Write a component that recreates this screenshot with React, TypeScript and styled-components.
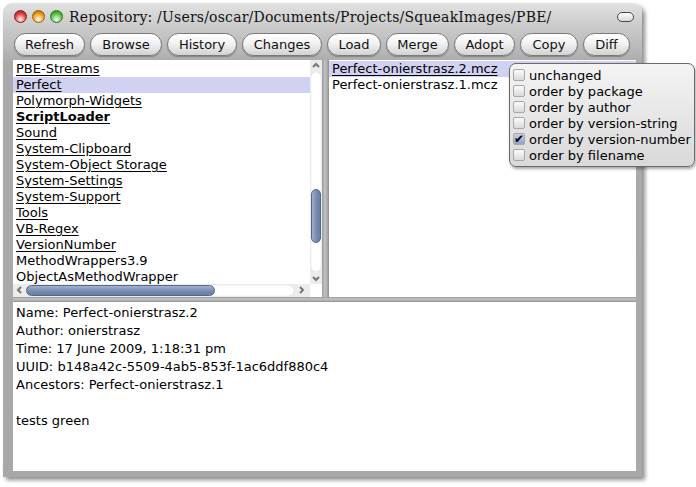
import styled, { createGlobalStyle } from "styled-components";

const GlobalStyle = createGlobalStyle`
  body {
    margin: 0;
    background: #ffffff;
    font-family: "DejaVu Sans", "Liberation Sans", sans-serif;
    font-size: 13px;
    color: #000;
  }
`;

const Desktop = styled.div`
  position: relative;
  width: 696px;
  height: 487px;
  padding: 3px 0 0 3px;
  box-sizing: border-box;
  overflow: hidden;
`;

const Window = styled.div`
  width: 639px;
  height: 474px;
  display: flex;
  flex-direction: column;
  background: linear-gradient(#e2e2e2 0px, #c8c8c8 26px, #b9b9b9 45px, #aaaaaa 60px, #a8a8a8 100%);
  border-radius: 9px 9px 0 0;
  box-shadow: 3px 3px 4px rgba(0, 0, 0, 0.45);
`;

const TitleBar = styled.div`
  height: 27px;
  display: flex;
  align-items: center;
  padding: 0 8px 0 11px;
  gap: 5px;
`;

const Light = styled.span<{ $color: string; $dark: string }>`
  width: 13px;
  height: 13px;
  flex: none;
  border-radius: 50%;
  border: 1px solid ${(p) => p.$dark};
  box-sizing: border-box;
  background: radial-gradient(circle at 50% 75%, #ffffff 0%, ${(p) => p.$color} 55%, ${(p) => p.$dark} 100%);
`;

const Title = styled.div`
  margin-left: 1px;
  width: 488px;
  overflow: hidden;
  white-space: nowrap;
  font-family: "DejaVu Serif", "Liberation Serif", serif;
  font-size: 14px;
  letter-spacing: 0.2px;
  color: #111;
`;

const Collapse = styled.span`
  margin-left: auto;
  width: 17px;
  height: 10px;
  border: 1.5px solid #4a4a4a;
  border-radius: 6px;
  box-sizing: border-box;
  background: linear-gradient(#ffffff, #d8d8d8);
`;

const Toolbar = styled.div`
  display: flex;
  margin-top: 3px;
  padding-left: 11px;
  gap: 5px;
`;

const Button = styled.button<{ $w: number }>`
  width: ${(p) => p.$w}px;
  height: 23px;
  padding: 0;
  border: 1px solid #7a7a7a;
  border-radius: 12px;
  background: linear-gradient(#ffffff 0%, #f2f2f2 45%, #d2d2d2 100%);
  box-shadow: 0 1px 1px rgba(0, 0, 0, 0.25);
  font-family: "DejaVu Sans", sans-serif;
  font-size: 13px;
  color: #111;
`;

const Panes = styled.div`
  flex: 1;
  display: flex;
  flex-direction: column;
  margin: 4px 6px 6px 10px;
  min-height: 0;
`;

const TopRow = styled.div`
  height: 237px;
  display: flex;
`;

const ListPane = styled.div`
  width: 309px;
  display: grid;
  grid-template-columns: 1fr 12px;
  grid-template-rows: 1fr 13px;
  background: #fff;
`;

const List = styled.div`
  overflow: hidden;
  padding-top: 1px;
`;

const Row = styled.div<{ $selected?: boolean; $underline?: boolean; $bold?: boolean }>`
  height: 16px;
  line-height: 16px;
  padding-left: 3px;
  white-space: nowrap;
  background: ${(p) => (p.$selected ? "#d1d1f2" : "transparent")};
  font-weight: ${(p) => (p.$bold ? "bold" : "normal")};
  text-decoration: ${(p) => (p.$underline ? "underline" : "none")};
  text-underline-offset: 2px;
`;

const VScroll = styled.div`
  display: flex;
  flex-direction: column;
  align-items: center;
  background: #ececec;
`;

const HScroll = styled.div`
  display: flex;
  align-items: center;
  background: #ececec;
  padding: 0 4px 0 1px;
`;

const Arrow = styled.svg`
  flex: none;
`;

const VRail = styled.div`
  flex: 1;
  width: 10px;
  margin: 1px 0;
  border-radius: 6px;
  background: #ffffff;
  box-shadow: inset 0 0 1px #b8b8b8;
  padding-top: 117px;
  box-sizing: border-box;
`;

const HRail = styled.div`
  flex: 1;
  height: 11px;
  margin: 0 2px;
  border-radius: 6px;
  background: #ffffff;
  box-shadow: inset 0 0 1px #b8b8b8;
`;

const VThumb = styled.div`
  width: 10px;
  height: 54px;
  border-radius: 5px;
  border: 1px solid #55678a;
  box-sizing: border-box;
  background: linear-gradient(90deg, #9fb0cc, #7489ad 60%, #6a7fa3);
`;

const HThumb = styled.div`
  width: 189px;
  height: 11px;
  border-radius: 6px;
  border: 1px solid #55678a;
  box-sizing: border-box;
  background: linear-gradient(#a3b3ce, #7489ad 60%, #6a7fa3);
`;

const Corner = styled.div`
  background: #fff;
`;

const VDivider = styled.div`
  width: 7px;
  background: linear-gradient(90deg, #9a9a9a, #c2c2c2 40%, #b0b0b0 70%, #8e8e8e);
`;

const VersionPane = styled.div`
  flex: 1;
  background: #fff;
  padding-top: 1px;
  overflow: hidden;
`;

const HDivider = styled.div`
  height: 5px;
  background: linear-gradient(#9a9a9a, #c2c2c2 40%, #b0b0b0 70%, #8e8e8e);
`;

const InfoPane = styled.div`
  flex: 1;
  background: #fff;
  padding: 2px 3px 1px;
  line-height: 18px;
`;

const Line = styled.div`
  height: 18px;
  white-space: nowrap;
`;

const Menu = styled.div`
  position: absolute;
  left: 509px;
  top: 63px;
  width: 186px;
  height: 104px;
  box-sizing: border-box;
  padding: 3px 0 0 3px;
  border: 1px solid #6a6a6a;
  border-radius: 7px;
  background: linear-gradient(#f4f4f4, #d9d9d9);
  box-shadow: 1px 2px 3px rgba(0, 0, 0, 0.35);
`;

const MenuItem = styled.div`
  height: 16px;
  display: flex;
  align-items: center;
  gap: 4px;
  white-space: nowrap;
`;

const Check = styled.span<{ $on?: boolean }>`
  width: 12px;
  height: 12px;
  flex: none;
  box-sizing: border-box;
  border: 1px solid #a8a8a8;
  border-radius: 2px;
  background: ${(p) =>
    p.$on ? "linear-gradient(#c6d2ea, #8ea3cc)" : "linear-gradient(#fafafa, #dadada)"};
  display: flex;
  align-items: center;
  justify-content: center;
  font-size: 12px;
  line-height: 12px;
  color: #000;
`;

const packages: { name: string; selected?: boolean; underline?: boolean; bold?: boolean }[] = [
  { name: "PBE-Streams", underline: true },
  { name: "Perfect", underline: true, selected: true },
  { name: "Polymorph-Widgets", underline: true },
  { name: "ScriptLoader", underline: true, bold: true },
  { name: "Sound", underline: true },
  { name: "System-Clipboard", underline: true },
  { name: "System-Object Storage", underline: true },
  { name: "System-Settings", underline: true },
  { name: "System-Support", underline: true },
  { name: "Tools", underline: true },
  { name: "VB-Regex", underline: true },
  { name: "VersionNumber", underline: true },
  { name: "MethodWrappers3.9" },
  { name: "ObjectAsMethodWrapper" },
];

const buttons: [string, number][] = [
  ["Refresh", 71],
  ["Browse", 72],
  ["History", 70],
  ["Changes", 80],
  ["Load", 54],
  ["Merge", 63],
  ["Adopt", 61],
  ["Copy", 58],
  ["Diff", 47],
];

const sortOptions = [
  "unchanged",
  "order by package",
  "order by author",
  "order by version-string",
  "order by version-number",
  "order by filename",
];

const Chevron = ({ dir }: { dir: "up" | "down" | "left" | "right" }) => {
  const paths = {
    up: "M2 7 L5 4 L8 7",
    down: "M2 4 L5 7 L8 4",
    left: "M7 2 L4 5 L7 8",
    right: "M4 2 L7 5 L4 8",
  };
  return (
    <Arrow width="10" height="11" viewBox="0 0 10 11">
      <path d={paths[dir]} fill="none" stroke="#777" strokeWidth="2" />
    </Arrow>
  );
};

const App = () => {
  return (
    <Desktop>
      <GlobalStyle />
      <Window>
        <TitleBar>
          <Light $color="#e84040" $dark="#8a1a1a" />
          <Light $color="#f0a020" $dark="#9a5a00" />
          <Light $color="#5cc040" $dark="#2c7a1a" />
          <Title>Repository: /Users/oscar/Documents/Projects/SqueakImages/PBE/</Title>
          <Collapse />
        </TitleBar>
        <Toolbar>
          {buttons.map(([label, w]) => (
            <Button key={label} $w={w}>
              {label}
            </Button>
          ))}
        </Toolbar>
        <Panes>
          <TopRow>
            <ListPane>
              <List>
                {packages.map((p) => (
                  <Row key={p.name} $selected={p.selected} $underline={p.underline} $bold={p.bold}>
                    {p.name}
                  </Row>
                ))}
              </List>
              <VScroll>
                <Chevron dir="up" />
                <VRail>
                  <VThumb />
                </VRail>
                <Chevron dir="down" />
              </VScroll>
              <HScroll>
                <Chevron dir="left" />
                <HRail>
                  <HThumb />
                </HRail>
                <Chevron dir="right" />
              </HScroll>
              <Corner />
            </ListPane>
            <VDivider />
            <VersionPane>
              <Row $selected $underline>
                Perfect-onierstrasz.2.mcz
              </Row>
              <Row>Perfect-onierstrasz.1.mcz</Row>
            </VersionPane>
          </TopRow>
          <HDivider />
          <InfoPane>
            <Line>Name: Perfect-onierstrasz.2</Line>
            <Line>Author: onierstrasz</Line>
            <Line>Time: 17 June 2009, 1:18:31 pm</Line>
            <Line>UUID: b148a42c-5509-4ab5-853f-1ac6ddf880c4</Line>
            <Line>Ancestors: Perfect-onierstrasz.1</Line>
            <Line />
            <Line>tests green</Line>
          </InfoPane>
        </Panes>
      </Window>
      <Menu>
        {sortOptions.map((o) => (
          <MenuItem key={o}>
            <Check $on={o === "order by version-number"}>{o === "order by version-number" ? "✔" : ""}</Check>
            {o}
          </MenuItem>
        ))}
      </Menu>
    </Desktop>
  );
};

export default App;
